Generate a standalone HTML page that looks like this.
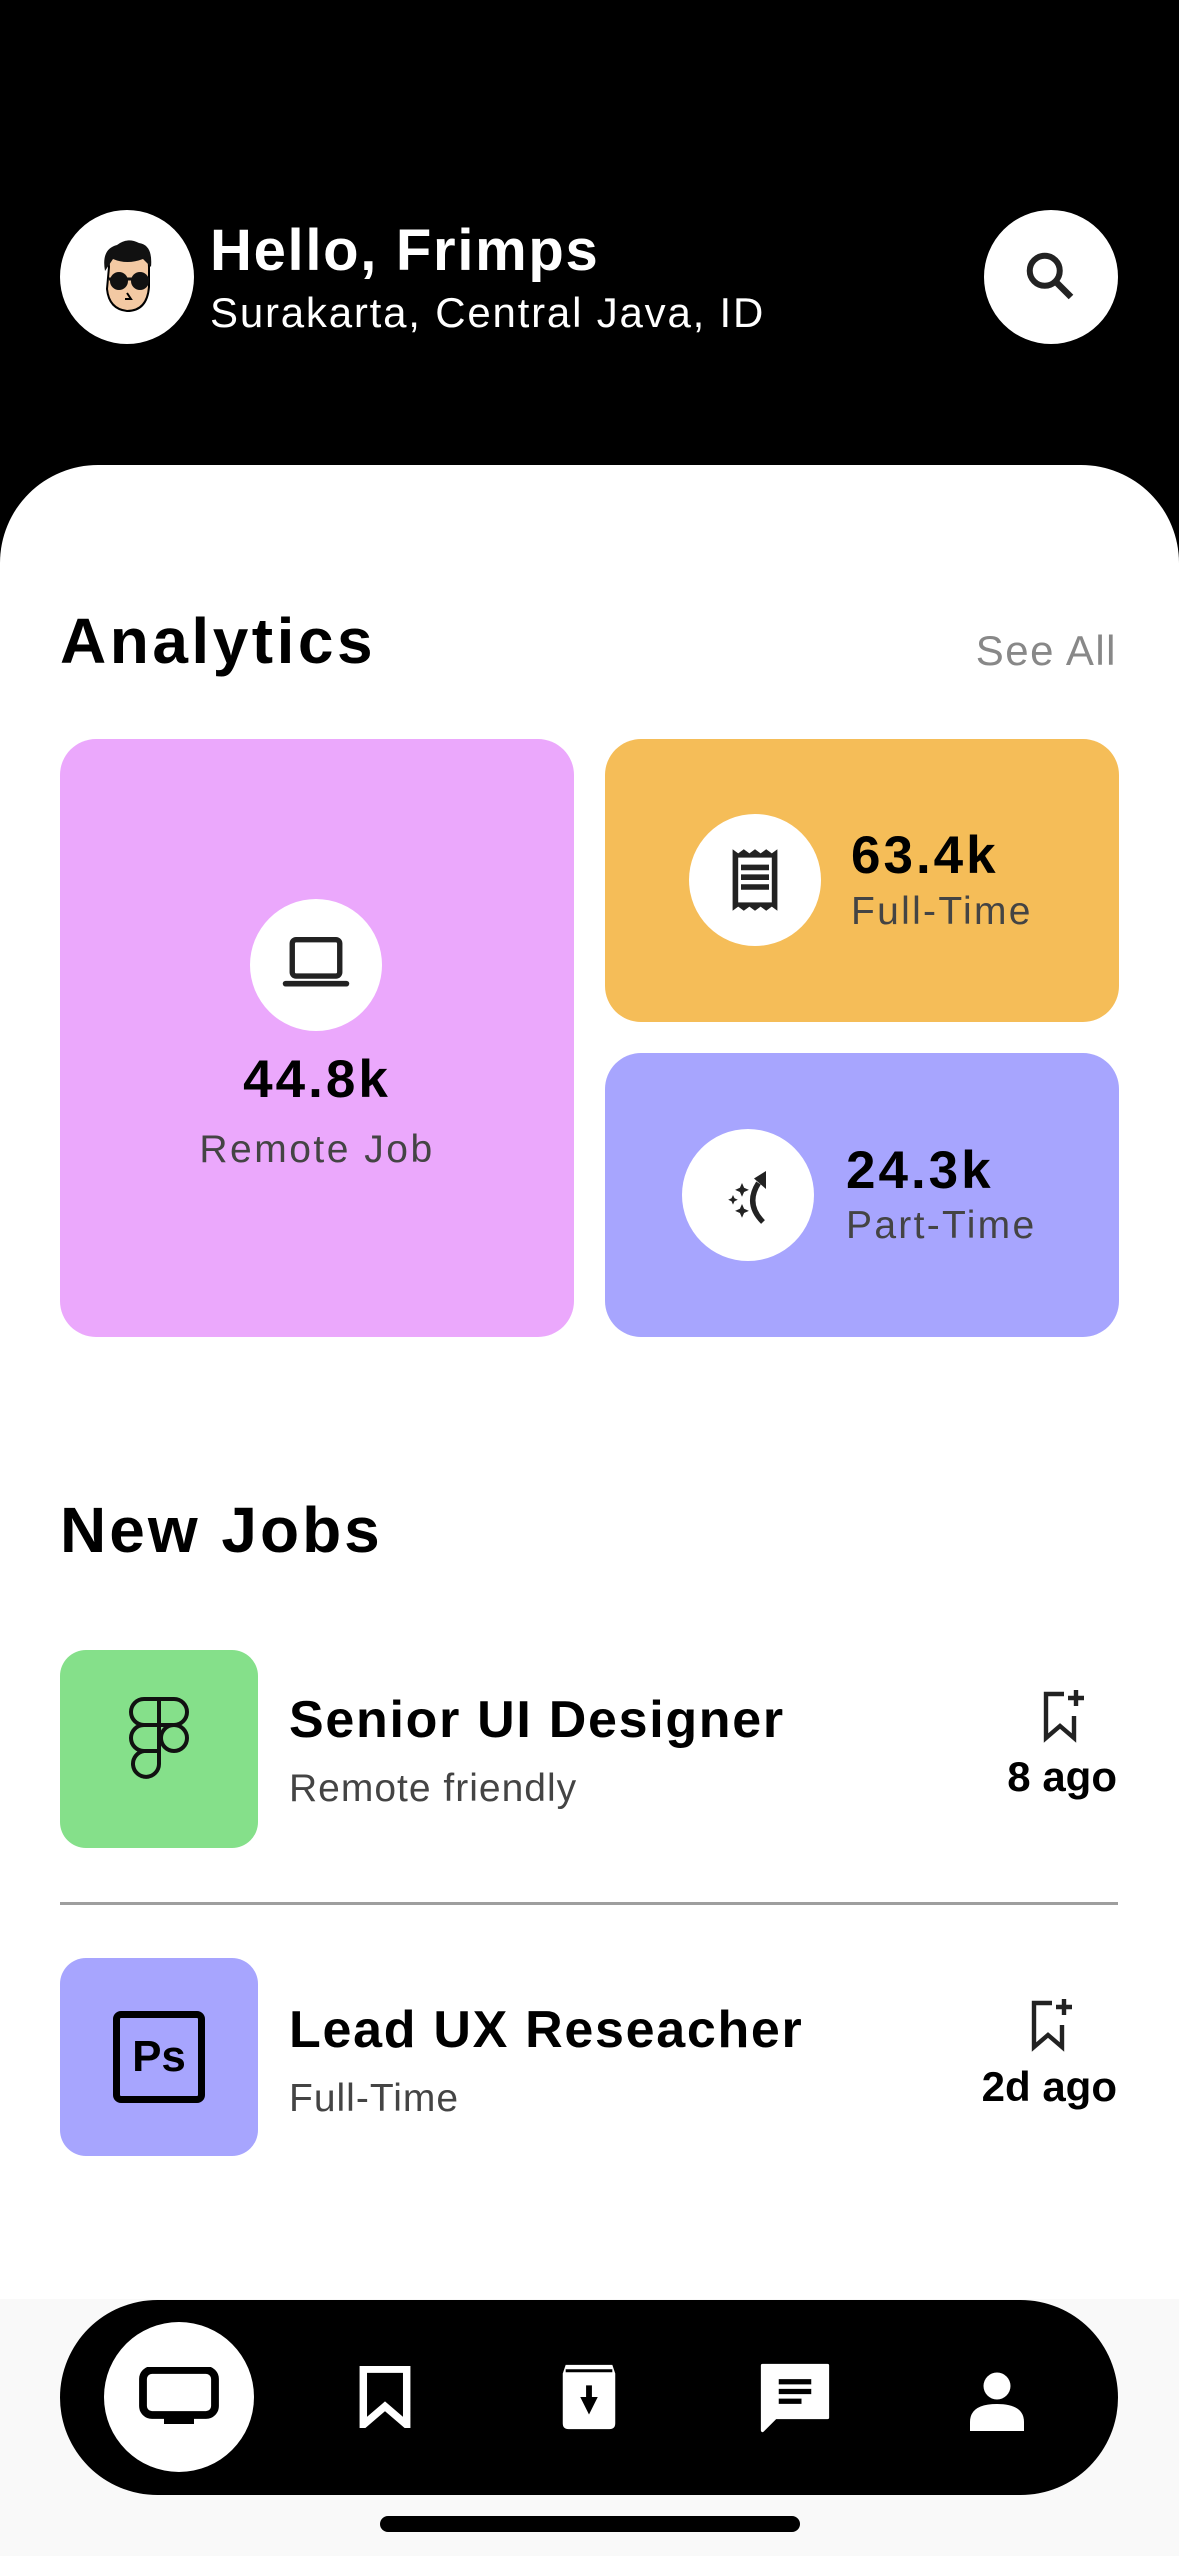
<!DOCTYPE html>
<html><head><meta charset="utf-8"><style>
*{margin:0;padding:0;box-sizing:border-box}
body{width:1179px;height:2556px;background:#000;position:relative;overflow:hidden;font-family:"Liberation Sans",sans-serif}
.a{position:absolute;line-height:1;white-space:nowrap}
.b{font-weight:bold}
.circ{position:absolute;border-radius:50%;background:#fff;display:flex;align-items:center;justify-content:center}
</style></head><body>
<div class="circ" style="left:60px;top:210px;width:134px;height:134px">
<svg width="80" height="80" viewBox="0 0 80 80"><path d="M22 30 Q20 8 40 8 Q62 8 62 30 L62 50 Q60 74 40 74 Q22 72 20 52Z" fill="#f3c9a3" stroke="#000" stroke-width="2"/><path d="M18 34 Q14 12 30 8 Q40 0 52 6 Q66 8 64 30 L56 22 Q40 28 26 22 Z" fill="#111"/><circle cx="32" cy="44" r="9" fill="#111"/><circle cx="53" cy="44" r="9" fill="#111"/><path d="M22 42 H62" stroke="#111" stroke-width="3"/><path d="M40 56 L44 62 L38 62" fill="none" stroke="#000" stroke-width="2"/></svg></div>
<div class="a b" style="left:210px;top:222px;font-size:58px;color:#fff;letter-spacing:1.7px">Hello, Frimps</div>
<div class="a" style="left:210px;top:292px;font-size:42px;color:#fff;letter-spacing:1.8px">Surakarta, Central Java, ID</div>
<div class="circ" style="left:984px;top:210px;width:134px;height:134px">
<svg width="60" height="60" viewBox="0 0 24 24"><circle cx="9.5" cy="9.5" r="6" fill="none" stroke="#222" stroke-width="2.4"/><path d="M14 14 L20 20" stroke="#222" stroke-width="2.6"/></svg></div>

<div style="position:absolute;left:0;top:465px;width:1179px;height:2091px;background:#fff;border-radius:98px 98px 0 0"></div>
<div class="a b" style="left:60px;top:609px;font-size:64px;color:#000;letter-spacing:3.5px">Analytics</div>
<div class="a" style="right:62px;top:630px;font-size:42px;color:#888;letter-spacing:1.5px">See All</div>

<div style="position:absolute;left:60px;top:739px;width:514px;height:598px;background:#eba8fc;border-radius:36px"></div>
<div class="circ" style="left:250px;top:899px;width:132px;height:132px"><svg width="76" height="76" viewBox="0 0 24 24"><rect x="4.5" y="4" width="15" height="11.5" rx="1.2" fill="none" stroke="#222" stroke-width="1.7"/><rect x="1.5" y="17" width="21" height="1.8" rx="0.9" fill="#222"/></svg></div>
<div class="a b" style="left:60px;width:514px;text-align:center;top:1053px;font-size:53px;color:#000;letter-spacing:3px">44.8k</div>
<div class="a" style="left:60px;width:514px;text-align:center;top:1130px;font-size:39px;color:#444;letter-spacing:2.5px">Remote Job</div>

<div style="position:absolute;left:605px;top:739px;width:514px;height:283px;background:#f5bd58;border-radius:36px"></div>
<div class="circ" style="left:689px;top:814px;width:132px;height:132px"><svg width="56" height="68" viewBox="0 0 20 24"><path d="M2 1 l2 1.5 2-1.5 2 1.5 2-1.5 2 1.5 2-1.5 2 1.5 2-1.5 V23 l-2-1.5-2 1.5-2-1.5-2 1.5-2-1.5-2 1.5-2-1.5-2 1.5Z" fill="#222"/><rect x="4" y="4" width="12" height="16" fill="#fff"/><path d="M5 7.5H15M5 11H15M5 14.5H15" stroke="#222" stroke-width="2"/></svg></div>
<div class="a b" style="left:851px;top:829px;font-size:53px;color:#000;letter-spacing:3px">63.4k</div>
<div class="a" style="left:851px;top:892px;font-size:39px;color:#444;letter-spacing:2.3px">Full-Time</div>

<div style="position:absolute;left:605px;top:1053px;width:514px;height:284px;background:#a7a5fe;border-radius:36px"></div>
<div class="circ" style="left:682px;top:1129px;width:132px;height:132px"><svg width="72" height="72" viewBox="0 0 24 24"><path d="M17 21 Q11 15 15.5 8" fill="none" stroke="#222" stroke-width="1.8"/><path d="M14 6.5 L18 4 L18 10Z" fill="#222"/><path d="M10 8 l.7 1.6 1.6.7-1.6.7L10 12.6l-.7-1.6-1.6-.7 1.6-.7z M7 12l.5 1.1 1.1.5-1.1.5L7 15.2l-.5-1.1-1.1-.5 1.1-.5z M10 15l.7 1.6 1.6.7-1.6.7L10 19.6l-.7-1.6-1.6-.7 1.6-.7z" fill="#222"/></svg></div>
<div class="a b" style="left:846px;top:1144px;font-size:53px;color:#000;letter-spacing:3px">24.3k</div>
<div class="a" style="left:846px;top:1206px;font-size:39px;color:#444;letter-spacing:2.3px">Part-Time</div>

<div class="a b" style="left:60px;top:1498px;font-size:64px;color:#000;letter-spacing:3px">New Jobs</div>

<div style="position:absolute;left:60px;top:1650px;width:198px;height:198px;background:#85e08a;border-radius:26px;display:flex;align-items:center;justify-content:center"><svg width="70" height="110" viewBox="0 0 70 110" fill="none" stroke="#111" stroke-width="4"><path d="M35 5H20a13 13 0 0 0 0 26H35Z M35 5H50a13 13 0 0 1 0 26H35Z M35 31H20a13 13 0 0 0 0 26H35Z M35 57H20a13 13 0 1 0 15 13Z"/><circle cx="50" cy="44" r="13"/></svg></div>
<div class="a b" style="left:289px;top:1694px;font-size:52px;color:#000;letter-spacing:1.7px">Senior UI Designer</div>
<div class="a" style="left:289px;top:1769px;font-size:39px;color:#444;letter-spacing:1px">Remote friendly</div>
<svg style="position:absolute;left:1036px;top:1688px" width="52" height="56" viewBox="0 0 26 28"><path d="M14 3H5V25L12 19L19 25V14" fill="none" stroke="#222" stroke-width="2.2"/><path d="M20 1V9M16 5H24" stroke="#222" stroke-width="2.2"/></svg>
<div class="a b" style="right:62px;top:1756px;font-size:42px;color:#000">8 ago</div>

<div style="position:absolute;left:60px;top:1902px;width:1058px;height:3px;background:#9e9e9e"></div>

<div style="position:absolute;left:60px;top:1958px;width:198px;height:198px;background:#a7a5fe;border-radius:26px;display:flex;align-items:center;justify-content:center"><div style="width:92px;height:92px;border:7px solid #000;border-radius:8px;display:flex;align-items:center;justify-content:center;font:bold 44px 'Liberation Sans',sans-serif;color:#000">Ps</div></div>
<div class="a b" style="left:289px;top:2004px;font-size:52px;color:#000;letter-spacing:1.7px">Lead UX Reseacher</div>
<div class="a" style="left:289px;top:2079px;font-size:39px;color:#444;letter-spacing:1px">Full-Time</div>
<svg style="position:absolute;left:1024px;top:1997px" width="52" height="56" viewBox="0 0 26 28"><path d="M14 3H5V25L12 19L19 25V14" fill="none" stroke="#222" stroke-width="2.2"/><path d="M20 1V9M16 5H24" stroke="#222" stroke-width="2.2"/></svg>
<div class="a b" style="right:62px;top:2066px;font-size:42px;color:#000">2d ago</div>

<div style="position:absolute;left:0;top:2299px;width:1179px;height:257px;background:#f9f9f9"></div>
<div style="position:absolute;left:60px;top:2300px;width:1058px;height:195px;background:#000;border-radius:98px"></div>
<div class="circ" style="left:104px;top:2322px;width:150px;height:150px"><svg width="84" height="60" viewBox="0 0 28 20"><rect x="2" y="1" width="24" height="15" rx="3" fill="none" stroke="#000" stroke-width="2.6"/><rect x="9" y="16" width="10" height="3" fill="#000"/></svg></div>
<svg style="position:absolute;left:357px;top:2366px" width="56" height="62" viewBox="0 0 18 20"><path d="M2 1H16V19L9 13L2 19Z" fill="none" stroke="#fff" stroke-width="2.4"/></svg>
<svg style="position:absolute;left:554px;top:2364px" width="70" height="66" viewBox="0 0 24 22"><path d="M3 3L4 0H20L21 3V20Q21 22 19 22H5Q3 22 3 20Z" fill="#fff"/><path d="M4 2H20" stroke="#000" stroke-width="1"/><path d="M11 7H13V11H15L12 17L9 11H11Z" fill="#000"/></svg>
<svg style="position:absolute;left:756px;top:2358px" width="78" height="80" viewBox="0 0 24 24"><path d="M2 2H22V18H6L2 22Z" fill="#fff" stroke="#fff" stroke-width="1" stroke-linejoin="round"/><path d="M7 7H17M7 10H17M7 13H14" stroke="#000" stroke-width="1.6"/></svg>
<svg style="position:absolute;left:964px;top:2370px" width="66" height="62" viewBox="0 0 22 20"><circle cx="11" cy="5" r="4.5" fill="#fff"/><path d="M2 20V17Q2 11 11 11Q20 11 20 17V20Z" fill="#fff"/></svg>
<div style="position:absolute;left:380px;top:2516px;width:420px;height:16px;background:#000;border-radius:8px"></div>
</body></html>
